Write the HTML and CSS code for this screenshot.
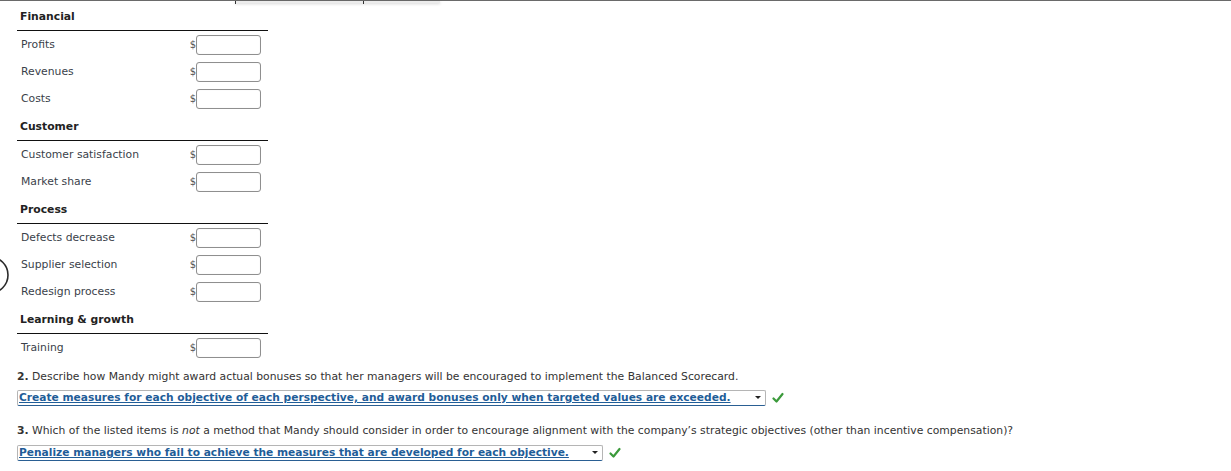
FILE: index.html
```html
<!DOCTYPE html>
<html lang="en">
<head>
<meta charset="utf-8">
<title>Balanced Scorecard</title>
<link rel="stylesheet" href="styles.css">
</head>
<body>
<div class="topbar"><div class="topshadow"><span class="tick t1"></span><span class="tick t2"></span></div></div>
<svg class="ring" width="30" height="50" viewBox="0 0 30 50" aria-hidden="true"><circle cx="-10" cy="25" r="18" fill="none" stroke="#2b2b2b" stroke-width="1.6"/></svg>
<main class="content">
  <section class="scorecard">
    <div class="group-head">Financial</div>
    <div class="row"><span class="label">Profits</span><span class="money"><span class="cur">$</span><span class="input"></span></span></div>
    <div class="row"><span class="label">Revenues</span><span class="money"><span class="cur">$</span><span class="input"></span></span></div>
    <div class="row"><span class="label">Costs</span><span class="money"><span class="cur">$</span><span class="input"></span></span></div>
    <div class="group-head">Customer</div>
    <div class="row"><span class="label">Customer satisfaction</span><span class="money"><span class="cur">$</span><span class="input"></span></span></div>
    <div class="row"><span class="label">Market share</span><span class="money"><span class="cur">$</span><span class="input"></span></span></div>
    <div class="group-head">Process</div>
    <div class="row"><span class="label">Defects decrease</span><span class="money"><span class="cur">$</span><span class="input"></span></span></div>
    <div class="row"><span class="label">Supplier selection</span><span class="money"><span class="cur">$</span><span class="input"></span></span></div>
    <div class="row"><span class="label">Redesign process</span><span class="money"><span class="cur">$</span><span class="input"></span></span></div>
    <div class="group-head">Learning &amp; growth</div>
    <div class="row"><span class="label">Training</span><span class="money"><span class="cur">$</span><span class="input"></span></span></div>
  </section>

  <section class="question q2">
    <p class="q-text"><b>2.</b> Describe how Mandy might award actual bonuses so that her managers will be encouraged to implement the Balanced Scorecard.</p>
    <div class="answer">
      <span class="select w2"><span class="sel-text">Create measures for each objective of each perspective, and award bonuses only when targeted values are exceeded.</span><span class="arrow"></span></span>
      <svg class="check" width="12" height="12" viewBox="0 0 12 12" aria-hidden="true"><path d="M1.5 6.5 L4.5 9.5 L10.5 2" fill="none" stroke="#3b9a3b" stroke-width="2.2" stroke-linecap="round" stroke-linejoin="round"/></svg>
    </div>
  </section>

  <section class="question q3">
    <p class="q-text"><b>3.</b> Which of the listed items is <i>not</i> a method that Mandy should consider in order to encourage alignment with the company’s strategic objectives (other than incentive compensation)?</p>
    <div class="answer">
      <span class="select w3"><span class="sel-text">Penalize managers who fail to achieve the measures that are developed for each objective.</span><span class="arrow"></span></span>
      <svg class="check" width="12" height="12" viewBox="0 0 12 12" aria-hidden="true"><path d="M1.5 6.5 L4.5 9.5 L10.5 2" fill="none" stroke="#3b9a3b" stroke-width="2.2" stroke-linecap="round" stroke-linejoin="round"/></svg>
    </div>
  </section>
</main>
</body>
</html>
```
FILE: styles.css
```css
html, body {
  margin: 0;
  padding: 0;
  background: #fff;
}
body {
  font-family: "DejaVu Sans", Verdana, sans-serif;
  font-size: 10.8px;
  color: #333;
  width: 1231px;
  height: 471px;
  overflow: hidden;
  position: relative;
}
.topbar {
  position: absolute;
  top: 0;
  left: 0;
  right: 0;
  height: 1px;
  background: #6a6a6a;
}
.topshadow {
  position: absolute;
  left: 235px;
  top: 1px;
  width: 205px;
  height: 2px;
  background: #ececec;
  box-shadow: 0 1px 3px rgba(0,0,0,0.18);
}
.tick {
  position: absolute;
  top: 0;
  width: 1px;
  height: 3px;
  background: #333;
}
.t1 { left: 0; }
.t2 { left: 128px; }
.ring {
  position: absolute;
  left: 0;
  top: 250px;
}
.content {
  padding: 2px 0 0 17px;
}
.scorecard {
  width: 251px;
  display: flex;
  flex-direction: column;
}
.group-head {
  display: flex;
  align-items: center;
  padding-left: 3px;
  padding-top: 1px;
  font-weight: bold;
  color: #222;
  border-bottom: 1px solid #111;
  box-sizing: content-box;
  height: 27px;
}
.row {
  height: 27px;
  display: flex;
  align-items: center;
  justify-content: space-between;
  padding: 0 7px 0 4px;
}
.label {
  color: #3a3f4a;
}
.money {
  display: flex;
  align-items: center;
}
.cur {
  font-size: 10px;
  color: #555;
}
.input {
  display: block;
  width: 63px;
  height: 18px;
  border: 1px solid #8f8f8f;
  border-radius: 3px;
  box-shadow: inset 0 0 1px rgba(0,0,0,0.15);
  background: #fff;
}
.question {
  margin: 0;
}
.q-text {
  margin: 0;
  line-height: 16px;
  color: #333;
}
.q-text b {
  color: #333;
}
.q2 {
  margin-top: 8px;
}
.q3 {
  margin-top: 17px;
}
.answer {
  display: flex;
  align-items: center;
  gap: 6px;
  margin-top: 5px;
}
.q3 .answer {
  margin-top: 6px;
}
.select {
  position: relative;
  display: inline-block;
  box-sizing: border-box;
  height: 16px;
  line-height: 14px;
  border: 1px solid #b5b5b5;
  border-bottom-color: #2a5f93;
  border-radius: 2px;
  padding: 0 0 0 1px;
  font-size: 10.65px;
  font-weight: bold;
  color: #1f5d98;
  white-space: nowrap;
  overflow: hidden;
}
.sel-text {
  text-decoration: underline;
}
.w2 { width: 749px; }
.w3 { width: 586px; }
.arrow {
  position: absolute;
  right: 4px;
  top: 5px;
  width: 0;
  height: 0;
  border-left: 3px solid transparent;
  border-right: 3px solid transparent;
  border-top: 3px solid #222;
}
.check {
  display: block;
}
```
